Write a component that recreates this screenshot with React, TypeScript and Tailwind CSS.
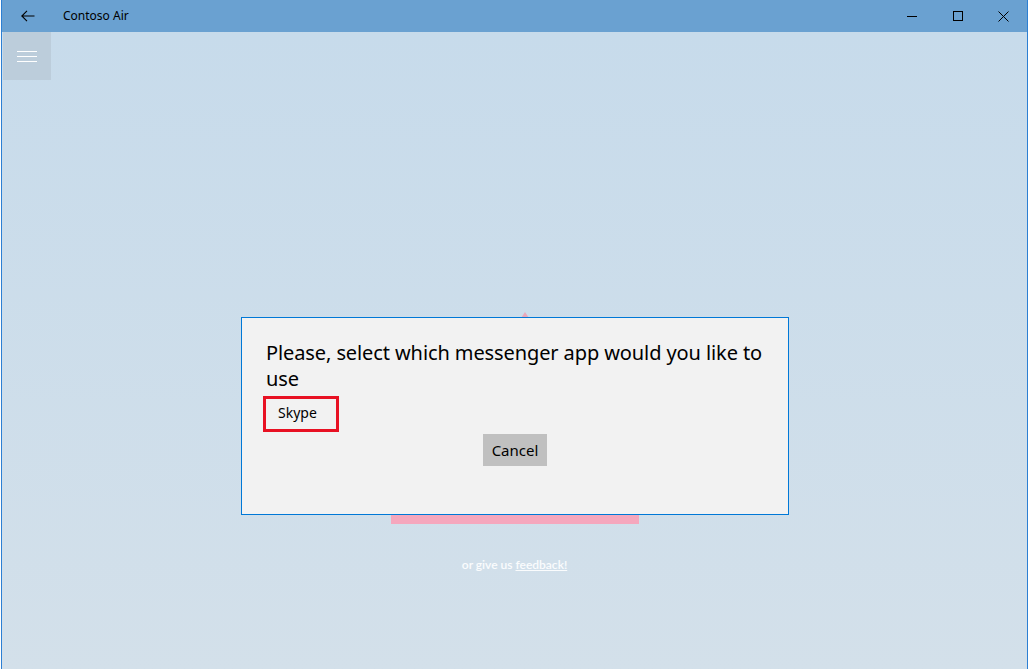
// Contoso Air window with a modal "choose messenger" dialog on top.

const SEGOE = { fontFamily: '"Segoe UI", "Noto Sans", "Open Sans", sans-serif' };

function TitleBar() {
  return (
    <div className="flex h-8 items-center bg-[#6aa1d1] text-black">
      <div className="flex w-[50px] justify-center pl-[2px]">
        <svg width="14" height="12" viewBox="0 0 14 12" fill="none" stroke="black" strokeWidth="1.1">
          <path d="M13.5 6H1M6 0.8L0.8 6L6 11.2" />
        </svg>
      </div>
      <span className="ml-[11px] text-[12px]" style={SEGOE}>
        Contoso Air
      </span>
      <div className="ml-auto flex h-full">
        <div className="flex w-[46px] items-center justify-center">
          <svg width="10" height="10" viewBox="0 0 10 10" stroke="black" strokeWidth="1">
            <path d="M0 5.5H10" />
          </svg>
        </div>
        <div className="flex w-[46px] items-center justify-center">
          <svg width="10" height="10" viewBox="0 0 10 10" fill="none" stroke="black" strokeWidth="1">
            <rect x="0.5" y="0.5" width="9" height="9" />
          </svg>
        </div>
        <div className="flex w-[46px] items-center justify-center pr-[2px]">
          <svg width="11" height="11" viewBox="0 0 11 11" fill="none" stroke="black" strokeWidth="1">
            <path d="M0.5 0.5L10.5 10.5M10.5 0.5L0.5 10.5" />
          </svg>
        </div>
      </div>
    </div>
  );
}

function Dialog() {
  return (
    <div
      className="flex h-[198px] w-[548px] flex-col border border-[#0078d7] bg-[#f2f2f2] pl-[24px] pr-[12px] pt-[22px] text-black"
      style={SEGOE}
    >
      <p className="text-[20px] leading-[26px] tracking-[-0.1px]">
        Please, select which messenger app would you like to use
      </p>
      <div className="-ml-[3px] mt-[4px] flex h-[36px] w-[76px] items-center border-[3px] border-[#e81123] pb-[4px] pl-[12px] text-[14px]">
        Skype
      </div>
      <div className="mt-[2px] flex justify-center pr-[12px]">
        <button className="h-[32px] w-[64px] bg-[#c0c0c0] text-[15px]">Cancel</button>
      </div>
    </div>
  );
}

export default function App() {
  return (
    <div className="h-[669px] w-[1029px] overflow-hidden bg-white">
      <div className="ml-[1px] flex h-full w-[1027px] flex-col border-x border-[#2c7fd3]">
        <TitleBar />
        <div className="relative flex-1 bg-gradient-to-b from-[#c7dbeb] to-[#d3e0ea]">
          <div className="ml-[1px] flex h-12 w-12 flex-col items-center justify-center gap-[4px] bg-[#bccddb]">
            <span className="h-px w-5 bg-white" />
            <span className="h-px w-5 bg-white" />
            <span className="h-px w-5 bg-white" />
          </div>

          {/* background content peeking out behind the dialog */}
          <div className="absolute left-[389px] top-[482px] h-[10px] w-[248px] bg-[#f5a7bd]" />
          <div className="absolute left-[519px] top-[280px] h-0 w-0 border-x-[4px] border-b-[6px] border-x-transparent border-b-[#e9a8bb]" />
          <p
            className="absolute left-0 right-0 top-[524px] text-center text-[12px] font-semibold text-white/90"
            style={{ fontFamily: "Lato, sans-serif" }}
          >
            or give us <span className="underline">feedback!</span>
          </p>

          <div className="absolute left-[239px] top-[285px]">
            <Dialog />
          </div>
        </div>
      </div>
    </div>
  );
}
